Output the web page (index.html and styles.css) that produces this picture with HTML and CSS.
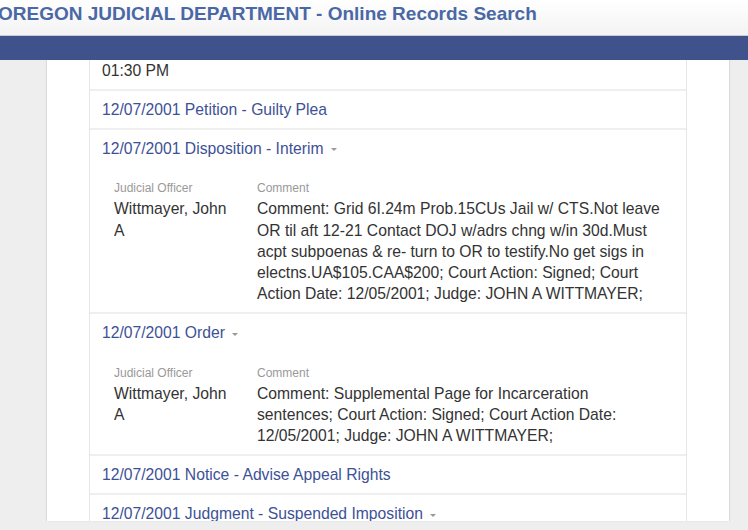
FILE: index.html
```html
<!DOCTYPE html>
<html lang="en">
<head>
<meta charset="UTF-8">
<meta name="viewport" content="width=device-width, initial-scale=1.0">
<title>Online Records Search</title>
<link rel="stylesheet" href="styles.css">
</head>
<body>
<header class="site-header">
    <h1 class="site-title">OREGON JUDICIAL DEPARTMENT - Online Records Search</h1>
</header>
<nav class="nav-bar"></nav>
<main class="page">
    <div class="card">
        <ul class="events">
            <li class="event event-cut">
                <div class="event-text">01:30 PM</div>
            </li>
            <li class="event">
                <a class="event-title" href="#">12/07/2001 Petition - Guilty Plea</a>
            </li>
            <li class="event">
                <a class="event-title" href="#">12/07/2001 Disposition - Interim <span class="caret"></span></a>
                <div class="details">
                    <div class="field">
                        <div class="field-label">Judicial Officer</div>
                        <div class="field-value">Wittmayer, John A</div>
                    </div>
                    <div class="field">
                        <div class="field-label">Comment</div>
                        <div class="field-value">Comment: Grid 6I.24m Prob.15CUs Jail w/ CTS.Not leave OR til aft 12-21 Contact DOJ w/adrs chng w/in 30d.Must acpt subpoenas &amp; re- turn to OR to testify.No get sigs in electns.UA$105.CAA$200; Court Action: Signed; Court Action Date: 12/05/2001; Judge: JOHN A WITTMAYER;</div>
                    </div>
                </div>
            </li>
            <li class="event">
                <a class="event-title" href="#">12/07/2001 Order <span class="caret"></span></a>
                <div class="details">
                    <div class="field">
                        <div class="field-label">Judicial Officer</div>
                        <div class="field-value">Wittmayer, John A</div>
                    </div>
                    <div class="field">
                        <div class="field-label">Comment</div>
                        <div class="field-value">Comment: Supplemental Page for Incarceration sentences; Court Action: Signed; Court Action Date: 12/05/2001; Judge: JOHN A WITTMAYER;</div>
                    </div>
                </div>
            </li>
            <li class="event">
                <a class="event-title" href="#">12/07/2001 Notice - Advise Appeal Rights</a>
            </li>
            <li class="event">
                <a class="event-title" href="#">12/07/2001 Judgment - Suspended Imposition <span class="caret"></span></a>
            </li>
        </ul>
    </div>
</main>
</body>
</html>
```

FILE: styles.css
```css
html, body {
    margin: 0;
    padding: 0;
}
body {
    font-family: "Liberation Sans", Arial, sans-serif;
    font-size: 15.7px;
    line-height: 21.3px;
    color: #333;
    background-color: #eeeeee;
    height: 530px;
    overflow: hidden;
}
.site-header {
    height: 35px;
    background: linear-gradient(#ffffff, #f3f3f3);
    border-bottom: 1px solid #c9ccd6;
    overflow: hidden;
}
.site-title {
    margin: 0 0 0 -2px;
    font-size: 19px;
    line-height: 28px;
    font-weight: bold;
    color: #4a68a6;
    white-space: nowrap;
}
.nav-bar {
    height: 24px;
    background-color: #3f528c;
}
.page {
    padding: 0 19px 0 47px;
}
.card {
    background: white;
    height: 461px;
    overflow: hidden;
    padding: 0 42px;
    box-shadow: -1px 0 1px rgba(0,0,0,0.08), 1px 0 1px rgba(0,0,0,0.08);
}
.events {
    list-style: none;
    margin: 0;
    padding: 0;
    border-left: 1px solid #e6e6e6;
    border-right: 1px solid #e6e6e6;
}
.event {
    padding: 8px 12px 7.7px;
    border-bottom: 2px solid #efefef;
}
.event-cut {
    margin-top: -8px;
}
.event-title {
    color: #3d5196;
    text-decoration: none;
}
.caret {
    display: inline-block;
    width: 0;
    height: 0;
    margin-left: 3px;
    vertical-align: middle;
    border-top: 3px solid #999;
    border-left: 3px solid transparent;
    border-right: 3px solid transparent;
}
.details {
    display: grid;
    grid-template-columns: 118px 408px;
    column-gap: 25px;
    padding: 21px 0 0 12px;
}
.field-label {
    font-size: 12px;
    line-height: 16px;
    color: #999;
    margin-bottom: 2px;
}
```
